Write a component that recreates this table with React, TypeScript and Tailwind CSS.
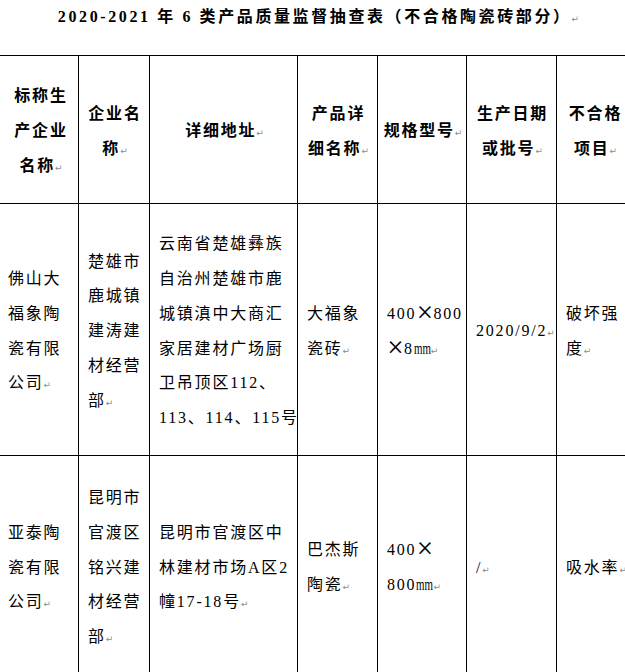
import type { ReactNode } from "react";

type Cell = { lines: ReactNode[] };

// Word-style paragraph mark shown at the end of every cell
function Mark() {
  return (
    <span className="font-['DejaVu_Sans'] text-[9px] font-normal tracking-normal text-[#8c8c8c]">
      ↵
    </span>
  );
}

// full-width looking multiplication sign
function Times() {
  return (
    <span className="inline-block w-[17px] text-center align-[-3px] text-[29px] leading-[16px] tracking-normal">
      ×
    </span>
  );
}

// narrow "mm" like the original's half-width unit
function Mm() {
  return <span className="inline-block w-[17px] origin-left scale-x-[0.68] tracking-normal">mm</span>;
}

const header: Cell[] = [
  { lines: ["标称生", "产企业", "名称"] },
  { lines: ["企业名", "称"] },
  { lines: ["详细地址"] },
  { lines: ["产品详", "细名称"] },
  { lines: ["规格型号"] },
  { lines: ["生产日期", "或批号"] },
  { lines: ["不合格", "项目"] },
];

const rows: Cell[][] = [
  [
    { lines: ["佛山大", "福象陶", "瓷有限", "公司"] },
    { lines: ["楚雄市", "鹿城镇", "建涛建", "材经营", "部"] },
    {
      lines: [
        "云南省楚雄彝族",
        "自治州楚雄市鹿",
        "城镇滇中大商汇",
        "家居建材广场厨",
        "卫吊顶区112、",
        "113、114、115号",
      ],
    },
    { lines: ["大福象", "瓷砖"] },
    {
      lines: [
        <>400<Times />800</>,
        <><Times />8<Mm /></>,
      ],
    },
    { lines: ["2020/9/2"] },
    { lines: ["破坏强", "度"] },
  ],
  [
    { lines: ["亚泰陶", "瓷有限", "公司"] },
    { lines: ["昆明市", "官渡区", "铭兴建", "材经营", "部"] },
    { lines: ["昆明市官渡区中", "林建材市场A区2", "幢17-18号"] },
    { lines: ["巴杰斯", "陶瓷"] },
    { lines: [<>400<Times /></>, <>800<Mm /></>] },
    { lines: ["/"] },
    { lines: ["吸水率"] },
  ],
];

function CellBox({ cell, head, first }: { cell: Cell; head?: boolean; first?: boolean }) {
  return (
    <div
      className={`flex flex-col justify-center bg-white pt-[6px] whitespace-nowrap ${
        head ? "items-center text-center font-bold" : "items-start"
      } ${first ? "pl-[11px] pr-[4px]" : "pl-[9px] pr-[7px]"}`}
    >
      {cell.lines.map((line, i) => (
        <div key={i}>
          {line}
          {i === cell.lines.length - 1 && <Mark />}
        </div>
      ))}
    </div>
  );
}

export default function App() {
  return (
    <div className="h-[672px] w-[625px] overflow-hidden bg-white font-['Liberation_Serif','Noto_Sans_CJK_SC',serif] text-[16px] leading-[34.7px] tracking-[1.8px] text-black">
      <div className="h-[55px] pl-[12px] text-center font-bold tracking-[2.6px]">
        2020-2021 年 6 类产品质量监督抽查表（不合格陶瓷砖部分）
        <Mark />
      </div>

      <div className="-ml-[4px] grid w-max grid-cols-[81px_70px_147px_79px_88px_89px_75px] grid-rows-[147px_251px_220px] gap-px border border-black bg-black">
        {header.map((c, i) => (
          <CellBox key={i} cell={c} head first={i === 0} />
        ))}
        {rows.map((r, ri) =>
          r.map((c, ci) => <CellBox key={`${ri}-${ci}`} cell={c} first={ci === 0} />)
        )}
      </div>
    </div>
  );
}
